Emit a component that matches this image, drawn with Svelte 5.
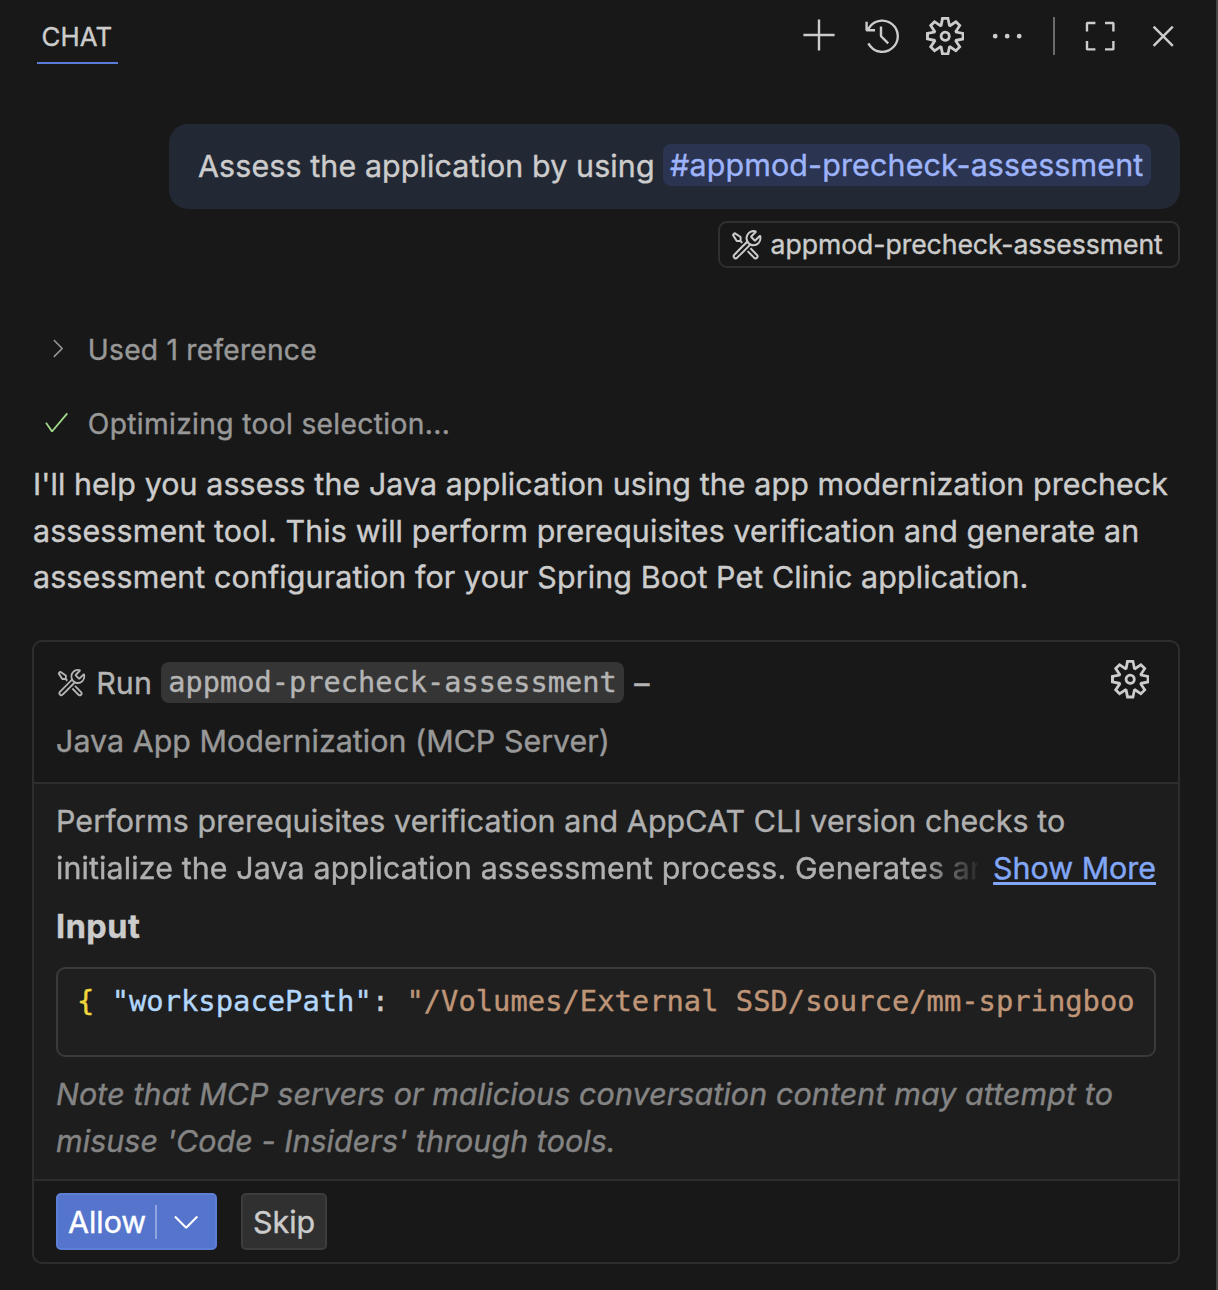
<script>
  const icons = {
    add: 'M14 7v1H8v6H7V8H1V7h6V1h1v6h6z',
    history:
      'M13.507 12.324a7 7 0 0 0 .065-8.56A7 7 0 0 0 2 4.393V2H1v3.5l.5.5H5V5H2.811a6.008 6.008 0 1 1-.135 5.77l-.887.462a7 7 0 0 0 11.718 1.092zm-3.361-.97l.708-.707L8 7.792V4H7v4l.146.354 3 3z',
    gear: 'M19.85 8.75l4.15.83v4.84l-4.15.83 2.35 3.52-3.43 3.43-3.52-2.35-.83 4.15H9.58l-.83-4.15-3.52 2.35-3.43-3.43 2.35-3.52L0 14.42V9.58l4.15-.83L1.8 5.23 5.23 1.8l3.52 2.35L9.58 0h4.84l.83 4.15 3.52-2.35 3.43 3.43-2.35 3.52zm-1.57 5.07l4-.81v-2l-4-.81-.54-1.3 2.29-3.43-1.43-1.43-3.43 2.29-1.3-.54-.81-4h-2l-.81 4-1.3.54-3.43-2.29-1.43 1.43L6.38 8.9l-.54 1.3-4 .81v2l4 .81.54 1.3-2.29 3.43 1.43 1.43 3.43-2.29 1.3.54.81 4h2l.81-4 1.3-.54 3.43 2.29 1.43-1.43-2.29-3.43.54-1.3zm-8.186-4.672A3.43 3.43 0 0 1 12 8.57 3.44 3.44 0 0 1 15.43 12a3.43 3.43 0 1 1-5.336-2.852zm.956 4.274c.281.188.612.288.95.288A1.7 1.7 0 0 0 13.71 12a1.71 1.71 0 1 0-2.66 1.422z',
    more: 'M4 8a1 1 0 1 1-2 0 1 1 0 0 1 2 0zm5 0a1 1 0 1 1-2 0 1 1 0 0 1 2 0zm5 0a1 1 0 1 1-2 0 1 1 0 0 1 2 0z',
    full: 'M6 2v1H3v3H2V2.5l.5-.5H6zM10 2h3.5l.5.5V6h-1V3h-3V2zM2 10h1v3h3v1H2.5l-.5-.5V10zM13 10h1v3.5l-.5.5H10v-1h3v-3z',
    close:
      'M8 8.707l3.646 3.647.708-.707L8.707 8l3.647-3.646-.707-.708L8 7.293 4.354 3.646l-.707.708L7.293 8l-3.646 3.646.707.708L8 8.707z',
    tools:
      'M14.773 3.485l-.78-.184-2.108 2.096-1.194-1.216 2.056-2.15-.18-.792a4.42 4.42 0 0 0-1.347-.228 3.64 3.64 0 0 0-1.457.28 3.824 3.824 0 0 0-1.186.84 3.736 3.736 0 0 0-.875 1.265 3.938 3.938 0 0 0 0 2.966 335.341 335.341 0 0 0-6.173 6.234c-.21.275-.31.618-.284.963a1.403 1.403 0 0 0 .464.967c.124.135.272.247.437.328.17.075.353.118.538.127.316-.006.619-.126.854-.337 1.548-1.457 4.514-4.45 6.199-6.204.457.194.948.294 1.444.293a3.736 3.736 0 0 0 2.677-1.133 3.885 3.885 0 0 0 1.111-2.73 4.211 4.211 0 0 0-.196-1.385zM2.933 13.928a.31.31 0 0 1-.135.07.437.437 0 0 1-.149 0 .346.346 0 0 1-.144-.057.336.336 0 0 1-.114-.11c-.14-.143-.271-.415-.14-.568 1.37-1.457 4.191-4.305 5.955-6.046.1.132.21.258.328.376.118.123.245.237.38.341-1.706 1.75-4.488 4.564-5.98 5.994zm11.118-9.065c.002.765-.296 1.5-.832 2.048a2.861 2.861 0 0 1-4.007 0 2.992 2.992 0 0 1-.635-3.137A2.748 2.748 0 0 1 10.14 2.18a2.76 2.76 0 0 1 1.072-.214h.254L9.649 3.839v.696l1.895 1.886h.66l1.847-1.816v.258zM3.24 6.688h1.531l.705.717.678-.674-.665-.678V6.01l.057-1.649-.22-.437-2.86-1.882-.591.066-.831.849-.066.599 1.838 2.918.424.215zm-.945-3.632L4.609 4.58 4.57 5.703H3.494L2.002 3.341l.293-.285zm7.105 6.96l.674-.673 3.106 3.185a1.479 1.479 0 0 1 0 2.039 1.404 1.404 0 0 1-1.549.315 1.31 1.31 0 0 1-.437-.315l-3.142-3.203.679-.678 3.132 3.194a.402.402 0 0 0 .153.105.477.477 0 0 0 .359 0 .403.403 0 0 0 .153-.105.436.436 0 0 0 .1-.153.525.525 0 0 0 .036-.184.547.547 0 0 0-.035-.184.436.436 0 0 0-.1-.153L9.401 10.016z',
    right:
      'M10.072 8.024L5.715 3.667l.618-.62L11 7.716v.618L6.333 13l-.618-.619 4.357-4.357z',
    check:
      'M14.431 3.323l-8.47 10-.79-.036-3.35-4.77.818-.574 2.978 4.24 8.051-9.506.764.646z',
    down: 'M7.976 10.072l4.357-4.357.62.618L8.284 11h-.618L3 6.333l.619-.618 4.357 4.357z',
  };
</script>

{#snippet icon(name, cls = 'lg')}
  <svg class="icon {cls}" viewBox={name === 'gear' ? '0 0 24 24' : '0 0 16 16'} aria-hidden="true">
    <path d={icons[name]} fill="currentColor" fill-rule="evenodd" />
  </svg>
{/snippet}

<main class="panel">
  <header class="bar">
    <span class="tab">CHAT</span>
    <div class="actions">
      {@render icon('add')}
      {@render icon('history')}
      {@render icon('gear')}
      {@render icon('more')}
      <span class="sep"></span>
      {@render icon('full')}
      {@render icon('close')}
    </div>
  </header>

  <section class="request">
    <div class="bubble">
      <span class="ask">Assess the application by using</span>
      <span class="mention">#appmod-precheck-assessment</span>
    </div>
    <div class="attachment">
      {@render icon('tools', 'md')}
      <span>appmod-precheck-assessment</span>
    </div>
  </section>

  <div class="step">{@render icon('right', 'sm')}<span>Used 1 reference</span></div>
  <div class="step done">{@render icon('check', 'sm')}<span>Optimizing tool selection...</span></div>

  <p class="answer">
    <span class="l1">I'll help you assess the Java application using the app modernization precheck</span><br />
    <span>assessment tool. This will perform prerequisites verification and generate an</span><br />
    <span>assessment configuration for your Spring Boot Pet Clinic application.</span>
  </p>

  <section class="card">
    <div class="head">
      <div class="title">
        <div class="run">
          {@render icon('tools', 'tl')}
          <span class="verb">Run</span>
          <code class="tool">appmod-precheck-assessment</code>
          <span class="dash">–</span>
        </div>
        <div class="server">Java App Modernization (MCP Server)</div>
      </div>
      {@render icon('gear')}
    </div>

    <div class="body">
      <div class="desc">
        <div class="d1">Performs prerequisites verification and AppCAT CLI version checks to</div>
        <div class="clamp">
          <span class="d2">initialize the Java application assessment process. Generates an</span>
          <a class="more" href="#more">Show More</a>
        </div>
      </div>
      <h3>Input</h3>
      <pre class="code"><span class="brace">&lbrace;</span> <span class="key">"workspacePath"</span>: <span class="str">"/Volumes/External SSD/source/mm-springboo</span></pre>
      <div class="note">
        <div>Note that MCP servers or malicious conversation content may attempt to</div>
        <div class="n2">misuse 'Code - Insiders' through tools.</div>
      </div>
    </div>

    <div class="foot">
      <button class="allow"><span class="label">Allow</span><span class="split"></span>{@render icon('down')}</button>
      <button class="skip">Skip</button>
    </div>
  </section>
</main>

<style>
  :global(body) {
    background: #181818;
  }
  .panel {
    box-sizing: border-box;
    width: 1218px;
    height: 1290px;
    padding: 0 36px 0 32px;
    border-right: 2px solid #444;
    overflow: hidden;
    background: #181818;
    color: #ccc;
    font-family: Inter, 'Liberation Sans', sans-serif;
    font-size: 30.4px;
    line-height: 46.8px;
    letter-spacing: 0.12px;
    -webkit-text-stroke: 0.4px currentColor;
    white-space: nowrap;
    display: flex;
    flex-direction: column;
  }
  .icon {
    display: block;
    flex: none;
  }
  .lg {
    width: 38.4px;
    height: 38.4px;
  }
  .md {
    width: 33.6px;
    height: 33.6px;
  }
  .tl {
    width: 31.2px;
    height: 31.2px;
    margin-top: -2px;
  }
  .sm {
    width: 28.8px;
    height: 28.8px;
    margin-top: -3px;
  }

  .bar {
    display: flex;
    justify-content: space-between;
    height: 124px;
    flex: none;
  }
  .tab {
    box-sizing: border-box;
    height: 64px;
    margin-left: 5px;
    width: 81px;
    padding: 14px 0 0 4.5px;
    border-bottom: 2px solid #5a7bd6;
    font-size: 25.8px;
  }
  .actions {
    display: flex;
    align-items: center;
    gap: 24px;
    height: 38.4px;
    margin: 16.5px -2px 0 0;
  }
  .sep {
    width: 2px;
    height: 38px;
    margin: 0 2.4px 0 2.4px;
    background: #6b6b6b;
  }

  .request {
    display: flex;
    flex-direction: column;
    align-items: flex-end;
    flex: none;
  }
  .bubble {
    box-sizing: border-box;
    display: flex;
    justify-content: space-between;
    align-items: flex-start;
    width: 1011px;
    height: 85px;
    padding: 20px 29px 0;
    border-radius: 19px;
    background: #222834;
  }
  .ask {
    line-height: 45px;
  }
  .mention {
    box-sizing: border-box;
    width: 488px;
    height: 42px;
    padding-left: 7px;
    border-radius: 8px;
    background: #2b3450;
    color: #9db3fb;
    line-height: 42px;
    letter-spacing: 0.16px;
  }
  .attachment {
    box-sizing: border-box;
    display: flex;
    align-items: center;
    gap: 7px;
    width: 462px;
    height: 47px;
    margin-top: 12px;
    padding: 0 10px;
    border: 2px solid #303030;
    border-radius: 9px;
    font-size: 26.6px;
    letter-spacing: -0.06px;
  }

  .step {
    display: flex;
    align-items: center;
    flex: none;
    gap: 16px;
    height: 46px;
    margin: 59px 0 0 11px;
    color: #989898;
    font-size: 28.2px;
    letter-spacing: 0.24px;
  }
  .done {
    gap: 17px;
    margin: 28px 0 0 10px;
    letter-spacing: 0.34px;
  }
  .done .icon {
    color: #a1d98b;
  }

  .answer {
    margin: 14.2px 0 0.7px 1px;
    flex: none;
    line-height: 46.5px;
  }
  .l1 {
    letter-spacing: 0.09px;
  }

  .card {
    box-sizing: border-box;
    display: flex;
    flex-direction: column;
    flex: none;
    height: 624px;
    margin-top: 39px;
    border: 2px solid #2e2e2e;
    border-radius: 10px;
    overflow: hidden;
  }
  .head {
    box-sizing: border-box;
    display: flex;
    justify-content: space-between;
    height: 142px;
    padding: 18px 29px 0 22px;
    border-bottom: 2px solid #2e2e2e;
  }
  .run {
    display: flex;
    align-items: center;
    height: 46px;
    color: #b4b4b4;
  }
  .verb {
    margin: 0 9px;
    width: 56px;
  }
  .tool {
    box-sizing: border-box;
    width: 463px;
    height: 41px;
    margin-top: -1px;
    padding-left: 7px;
    border-radius: 8px;
    background: #353535;
    font: 28.6px/41px 'DejaVu Sans Mono', monospace;
    letter-spacing: 0.04px;
  }
  .dash {
    margin-left: 10px;
  }
  .server {
    margin-top: 12px;
    color: #989898;
    letter-spacing: 0.03px;
  }

  .body {
    box-sizing: border-box;
    height: 397px;
    padding: 14px 22px 0;
    border-bottom: 2px solid #2e2e2e;
    background: #1d1d1d;
  }
  .desc {
    color: #b0b0b0;
    letter-spacing: 0.12px;
  }
  .d1 {
    letter-spacing: 0.1px;
  }
  .clamp {
    display: flex;
    justify-content: space-between;
  }
  .d2 {
    mask-image: linear-gradient(to right, #000 865px, rgb(0 0 0 / 0.1) 921px, transparent 922px);
  }
  .more {
    color: #82a7f8;
    letter-spacing: 0;
    text-decoration-thickness: 3px;
    text-underline-offset: 3px;
  }
  h3 {
    margin: 12px 0 17px;
    font-size: 32.4px;
    line-height: 46px;
    font-weight: 650;
    letter-spacing: 0.55px;
  }
  .code {
    box-sizing: border-box;
    height: 90px;
    margin: 0;
    padding: 9px 19px;
    border: 2px solid #3a3a3a;
    border-radius: 9px;
    background: #1f1f1f;
    font: 28.8px/46px 'DejaVu Sans Mono', monospace;
    letter-spacing: 0;
  }
  .brace {
    color: #f0d73c;
  }
  .key {
    color: #b3d7fb;
  }
  .str {
    color: #bf9578;
  }
  .note {
    margin-top: 14px;
    color: #848484;
    font-style: italic;
  }
  .n2 {
    letter-spacing: 0.09px;
  }

  .foot {
    display: flex;
    gap: 24px;
    padding: 12px 22px;
  }
  button {
    box-sizing: border-box;
    display: flex;
    align-items: center;
    height: 57px;
    padding: 1px 10px 0;
    border: 2px solid #3d3d3d;
    border-radius: 5px;
    background: #303030;
    color: #ccc;
    font: inherit;
  }
  .skip {
    width: 86px;
  }
  .allow {
    width: 161px;
    border-color: #5e7fd6;
    background: #5575cd;
    color: #fff;
  }
  .allow .icon {
    margin-top: -2px;
  }
  .label {
    width: 87px;
    text-align: left;
  }
  .split {
    width: 2px;
    height: 34px;
    margin: -1px 10px 0 0;
    background: #8fa5df;
  }
</style>
